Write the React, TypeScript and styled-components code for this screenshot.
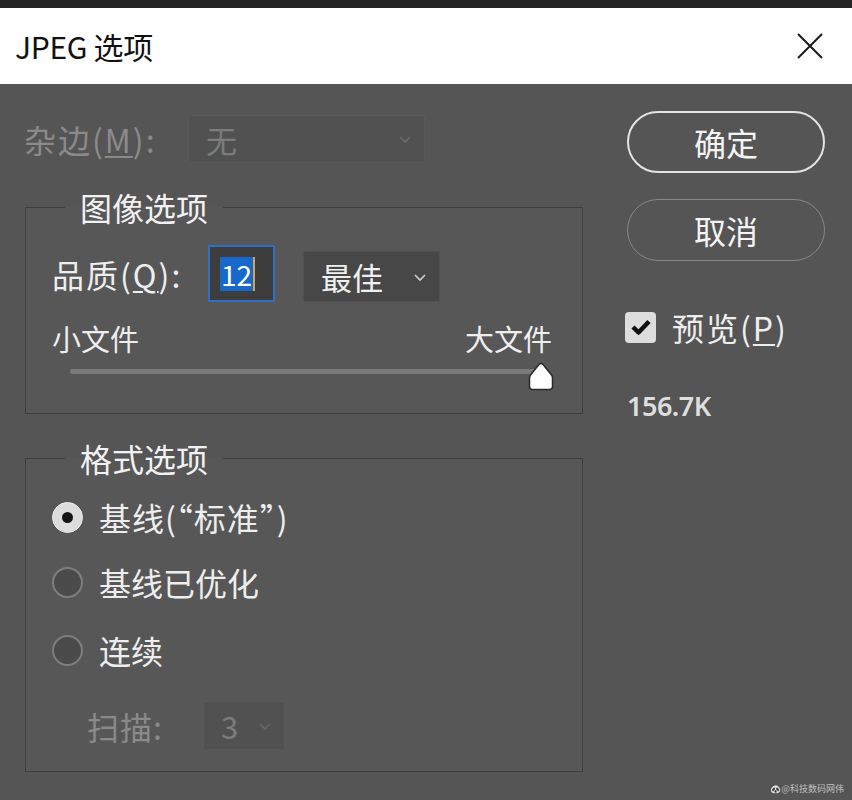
import * as React from 'react';
import styled, { createGlobalStyle, css } from 'styled-components';

const GlobalStyle = createGlobalStyle`
  html, body {
    margin: 0;
    padding: 0;
    background: #555555;
  }
  body {
    font-family: "Noto Sans CJK SC", "Noto Sans", "Liberation Sans", sans-serif;
    color: #eeeeee;
  }
  * {
    box-sizing: border-box;
  }
`;

const Window = styled.div`
  width: 852px;
  height: 800px;
  display: flex;
  flex-direction: column;
  background: #555555;
  overflow: hidden;
  position: relative;
`;

const TopStrip = styled.div`
  height: 8px;
  background: #252525;
`;

const TitleBar = styled.div`
  height: 76px;
  background: #ffffff;
  display: flex;
  align-items: center;
  justify-content: space-between;
  padding: 0 28px 0 15px;
`;

const Title = styled.div`
  font-size: 30px;
  line-height: 40px;
  color: #111111;
  letter-spacing: -0.3px;
`;

const Body = styled.div`
  flex: 1;
  display: flex;
  padding: 0 0 0 24px;
`;

const LeftColumn = styled.div`
  width: 560px;
  display: flex;
  flex-direction: column;
`;

const RightColumn = styled.div`
  width: 198px;
  margin-left: 43px;
  padding-top: 27px;
  display: flex;
  flex-direction: column;
`;

const Label = styled.span<{ $dim?: boolean; $width?: number; $size?: number; $spacing?: number }>`
  font-size: ${({ $size }) => $size ?? 32}px;
  letter-spacing: ${({ $spacing }) => $spacing ?? 0}px;
  line-height: 34px;
  color: ${({ $dim }) => ($dim ? '#8a8a8a' : '#eeeeee')};
  white-space: nowrap;
  ${({ $width }) =>
    $width &&
    css`
      width: ${$width}px;
      flex-shrink: 0;
    `}
`;

const Key = styled.span`
  text-decoration: underline;
  text-underline-offset: 3px;
  text-decoration-thickness: 2px;
`;

const MatteRow = styled.div`
  margin-top: 31px;
  height: 48px;
  display: flex;
  align-items: center;
`;

const Select = styled.div<{ $width: number; $height: number; $dim?: boolean }>`
  width: ${({ $width }) => $width}px;
  height: ${({ $height }) => $height}px;
  display: flex;
  align-items: center;
  justify-content: space-between;
  padding: 0 12px 0 17px;
  background: ${({ $dim }) => ($dim ? '#515151' : '#474747')};
  border: 1px solid ${({ $dim }) => ($dim ? '#595959' : '#505050')};
  border-radius: 2px;
  font-size: 31px;
  color: ${({ $dim }) => ($dim ? '#7c7c7c' : '#f0f0f0')};
`;

const Group = styled.fieldset<{ $top: number }>`
  margin: ${({ $top }) => $top}px 0 0 1px;
  width: 558px;
  padding: 0 0 0 26px;
  border: 1px solid #3e3e3e;
  background: #575757;
`;

const Legend = styled.legend`
  margin-left: 13px;
  padding: 0 15px;
  font-size: 32px;
  line-height: 34px;
  color: #f2f2f2;
`;

const QualityRow = styled.div`
  margin-top: 21px;
  height: 57px;
  display: flex;
  align-items: center;
`;

const NumberBox = styled.div`
  width: 67px;
  height: 57px;
  margin-left: 23px;
  border: 2px solid #2f6fc4;
  background: #3d3d3d;
  display: flex;
  align-items: center;
  padding-left: 10px;
`;

const Selected = styled.span`
  background: #1868cc;
  color: #ffffff;
  font-size: 28px;
  line-height: 34px;
  padding: 0 1px;
  border-right: 2px solid #d8a050;
`;

const QualitySelect = styled(Select)`
  margin-left: 28px;
  align-self: flex-end;
`;

const SizeLabels = styled.div`
  margin-top: 19px;
  width: 500px;
  display: flex;
  justify-content: space-between;
`;

const SliderArea = styled.div`
  position: relative;
  margin: 7px 0 23px 18px;
  width: 484px;
  height: 28px;
`;

const Track = styled.div`
  position: absolute;
  left: 0;
  top: 7px;
  width: 472px;
  height: 5px;
  background: #7a7a7a;
  border-radius: 2px;
`;

const Thumb = styled.svg`
  position: absolute;
  left: 458px;
  top: 0;
`;

const RadioRow = styled.div<{ $top: number }>`
  margin-top: ${({ $top }) => $top}px;
  height: 44px;
  display: flex;
  align-items: center;
  gap: 16px;
`;

const RadioDot = styled.span<{ $checked?: boolean }>`
  width: 31px;
  height: 31px;
  border-radius: 50%;
  flex-shrink: 0;
  display: flex;
  align-items: center;
  justify-content: center;
  ${({ $checked }) =>
    $checked
      ? css`
          background: #dcdcdc;
          border: 1px solid #eeeeee;
          &::after {
            content: '';
            width: 11px;
            height: 11px;
            border-radius: 50%;
            background: #151515;
          }
        `
      : css`
          background: #4b4b4b;
          border: 2px solid #7e7e7e;
        `}
`;

const ScanRow = styled.div`
  margin: 29px 0 21px 35px;
  height: 49px;
  display: flex;
  align-items: center;
`;

const Button = styled.div<{ $primary?: boolean }>`
  height: 62px;
  display: flex;
  align-items: center;
  justify-content: center;
  border-radius: 31px;
  font-size: 32px;
  color: #f4f4f4;
  border: ${({ $primary }) => ($primary ? '2px solid #e4e4e4' : '1.5px solid #878787')};
  & + & {
    margin-top: 26px;
  }
`;

const PreviewRow = styled.div`
  margin: 50px 0 0 -2px;
  height: 32px;
  display: flex;
  align-items: center;
  gap: 16px;
`;

const CheckBox = styled.span`
  width: 31px;
  height: 31px;
  border-radius: 4px;
  background: #dddddd;
  display: flex;
  align-items: center;
  justify-content: center;
`;

const FileSize = styled.div`
  margin-top: 50px;
  font-family: "Noto Sans", "Liberation Sans", sans-serif;
  font-size: 27px;
  line-height: 26px;
  font-weight: 600;
  letter-spacing: -0.5px;
  color: #dedede;
`;

const Watermark = styled.div`
  position: absolute;
  right: 8px;
  bottom: 5px;
  font-size: 9px;
  color: #d8d8d8;
  opacity: 0.8;
`;

const Chevron = ({ color }: { color: string }) => (
  <svg width="14" height="10" viewBox="0 0 14 10">
    <path d="M2 3 L7 8 L12 3" fill="none" stroke={color} strokeWidth="1.6" />
  </svg>
);

const CloseIcon = () => (
  <svg width="28" height="28" viewBox="0 0 28 28">
    <path d="M2 2 L26 26 M26 2 L2 26" stroke="#1a1a1a" strokeWidth="2" fill="none" />
  </svg>
);

const CheckMark = () => (
  <svg width="22" height="18" viewBox="0 0 22 18">
    <path d="M3 9 L8.5 14.5 L19 3.5" fill="none" stroke="#111111" strokeWidth="4.5" strokeLinejoin="round" />
  </svg>
);

export default function App() {
  return (
    <Window>
      <GlobalStyle />
      <TopStrip />
      <TitleBar>
        <Title>JPEG 选项</Title>
        <CloseIcon />
      </TitleBar>
      <Body>
        <LeftColumn>
          <MatteRow>
            <Label $dim $width={164} $spacing={2}>
              杂边(<Key>M</Key>):
            </Label>
            <Select $width={237} $height={48} $dim>
              <span>无</span>
              <Chevron color="#6a6a6a" />
            </Select>
          </MatteRow>

          <Group $top={27}>
            <Legend>图像选项</Legend>
            <QualityRow>
              <Label $width={133} $spacing={2}>
                品质(<Key>Q</Key>):
              </Label>
              <NumberBox>
                <Selected>12</Selected>
              </NumberBox>
              <QualitySelect $width={137} $height={51}>
                <span>最佳</span>
                <Chevron color="#d0d0d0" />
              </QualitySelect>
            </QualityRow>
            <SizeLabels>
              <Label $size={29}>小文件</Label>
              <Label $size={29}>大文件</Label>
            </SizeLabels>
            <SliderArea>
              <Track />
              <Thumb width="26" height="29" viewBox="0 0 26 29">
                <path
                  d="M13 1.5 Q14 1.5 15 2.6 L23.5 13 Q24.5 14.2 24.5 16 L24.5 24.5 Q24.5 27.5 21.5 27.5 L4.5 27.5 Q1.5 27.5 1.5 24.5 L1.5 16 Q1.5 14.2 2.5 13 L11 2.6 Q12 1.5 13 1.5 Z"
                  fill="#ffffff"
                  stroke="#2a2a2a"
                  strokeWidth="1.5"
                />
              </Thumb>
            </SliderArea>
          </Group>

          <Group $top={27}>
            <Legend>格式选项</Legend>
            <RadioRow $top={20}>
              <RadioDot $checked />
              <Label $spacing={1}>基线(“标准”)</Label>
            </RadioRow>
            <RadioRow $top={21}>
              <RadioDot />
              <Label>基线已优化</Label>
            </RadioRow>
            <RadioRow $top={24}>
              <RadioDot />
              <Label>连续</Label>
            </RadioRow>
            <ScanRow>
              <Label $dim $width={116} $spacing={1}>
                扫描:
              </Label>
              <Select $width={82} $height={49} $dim>
                <span>3</span>
                <Chevron color="#666666" />
              </Select>
            </ScanRow>
          </Group>
        </LeftColumn>

        <RightColumn>
          <Button $primary>确定</Button>
          <Button>取消</Button>
          <PreviewRow>
            <CheckBox>
              <CheckMark />
            </CheckBox>
            <Label $spacing={2}>
              预览(<Key>P</Key>)
            </Label>
          </PreviewRow>
          <FileSize>156.7K</FileSize>
        </RightColumn>
      </Body>
      <Watermark>🐼@科技数码网伟</Watermark>
    </Window>
  );
}
